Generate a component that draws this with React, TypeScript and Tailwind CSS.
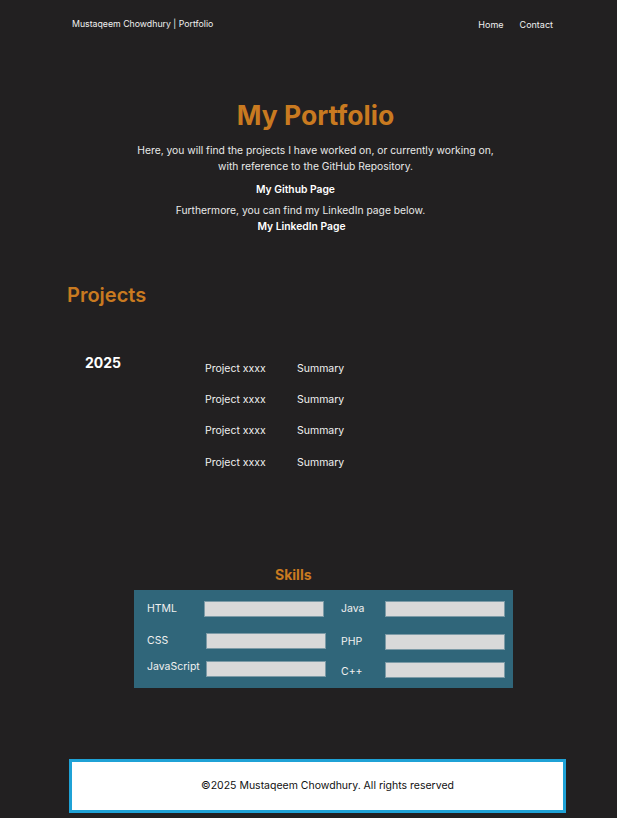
const projects = ["Project xxxx", "Project xxxx", "Project xxxx", "Project xxxx"];

function SkillBar() {
  return <div className="h-[16px] w-[120px] shrink-0 border border-[#7c9aa6] bg-[#d9d9d9]" />;
}

export default function App() {
  return (
    <div className="min-h-[818px] bg-[#222021] font-['Inter',sans-serif] text-white">
      {/* Header */}
      <header className="flex items-center justify-between pl-[72px] pr-[64px] pt-[17px]">
        <span className="text-[8.75px] text-[#f0f0f0]">Mustaqeem Chowdhury | Portfolio</span>
        <nav className="flex gap-[16px] pt-[1px] text-[9px] text-[#f0f0f0]">
          <a href="#">Home</a>
          <a href="#">Contact</a>
        </nav>
      </header>

      {/* Intro */}
      <section className="ml-[14px] mt-[67px] flex flex-col items-center text-center">
        <h1 className="text-[26.5px] font-bold leading-[32px] text-[#c97a20]">My Portfolio</h1>
        <p className="mt-[11px] text-[10.3px] leading-[16px] text-[#e8e8e8]">
          Here, you will find the projects I have worked on, or currently working on,
          <br />
          with reference to the GitHub Repository.
        </p>
        <a href="#" className="mr-[40px] mt-[7px] text-[10.3px] font-semibold leading-[16px]">
          My Github Page
        </a>
        <p className="mr-[30px] mt-[5px] text-[10.3px] leading-[16px] text-[#e8e8e8]">
          Furthermore, you can find my LinkedIn page below.
        </p>
        <a href="#" className="mr-[28px] text-[10.3px] font-semibold leading-[16px]">
          My LinkedIn Page
        </a>
      </section>

      {/* Projects */}
      <section className="pl-[67px] pt-[48px]">
        <h2 className="text-[20px] font-semibold leading-[26px] text-[#c97a20]">Projects</h2>
        <div className="mt-[46px] flex pl-[18px]">
          <span className="w-[120px] text-[14px] font-bold leading-[18px]">2025</span>
          <div className="mt-[8px] flex flex-col text-[10.5px] leading-[14px] text-[#f0f0f0]">
            {projects.map((p, i) => (
              <div
                key={i}
                className={
                  "flex " + (i === 1 ? "mt-[17px]" : i === 2 ? "mt-[17px]" : i === 3 ? "mt-[18px]" : "")
                }
              >
                <span className="w-[92px]">{p}</span>
                <span>Summary</span>
              </div>
            ))}
          </div>
        </div>
      </section>

      {/* Skills */}
      <section className="mt-[96px] flex flex-col items-start pl-[134px]">
        <h3 className="ml-[141px] text-[14px] font-bold leading-[18px] text-[#c97a20]">Skills</h3>
        <div className="mt-[6px] flex h-[98px] w-[379px] bg-[#30667a] pl-[13px] pt-[11px] text-[10.5px] text-[#f0f0f0]">
          <div className="flex w-[194px] flex-col">
            <div className="flex h-[16px] items-center">
              <span className="w-[57px]">HTML</span>
              <SkillBar />
            </div>
            <div className="mt-[16px] flex h-[16px] items-center">
              <span className="w-[59px]">CSS</span>
              <SkillBar />
            </div>
            <div className="mt-[12px] flex h-[16px] items-center">
              <span className="w-[59px] -translate-y-[2px]">JavaScript</span>
              <SkillBar />
            </div>
          </div>
          <div className="flex flex-col">
            <div className="flex h-[16px] items-center">
              <span className="w-[44px]">Java</span>
              <SkillBar />
            </div>
            <div className="mt-[17px] flex h-[16px] items-center">
              <span className="w-[44px]">PHP</span>
              <SkillBar />
            </div>
            <div className="mt-[12px] flex h-[16px] items-center">
              <span className="w-[44px] translate-y-[2px]">C++</span>
              <SkillBar />
            </div>
          </div>
        </div>
      </section>

      {/* Footer */}
      <footer className="ml-[69px] mt-[71px] flex h-[54px] w-[497px] items-center justify-center border-[3px] border-[#1fa2d6] bg-white pl-[20px] text-[10.5px] text-[#111]">
        ©2025 Mustaqeem Chowdhury. All rights reserved
      </footer>
    </div>
  );
}
